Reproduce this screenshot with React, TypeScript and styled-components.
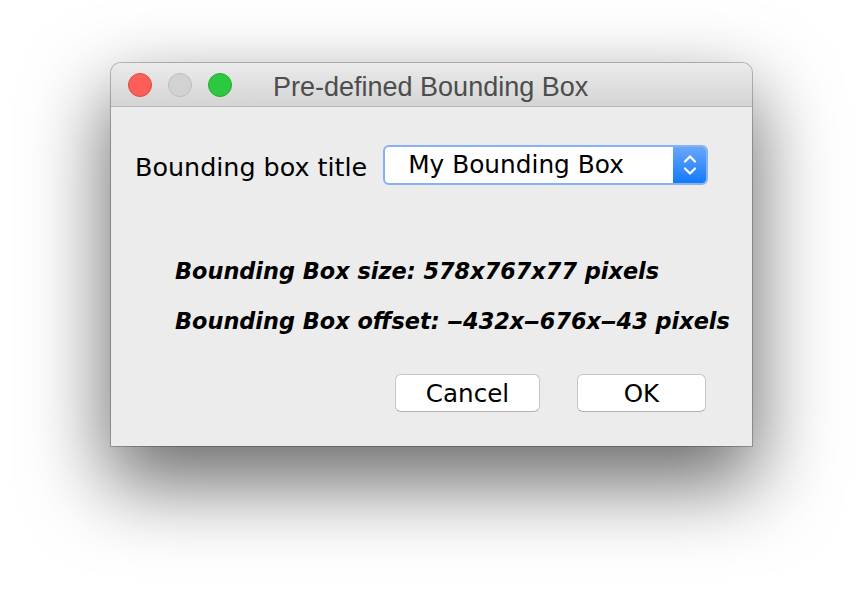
import * as React from "react";
import styled, { createGlobalStyle } from "styled-components";

const GlobalStyle = createGlobalStyle`
	html, body {
		margin: 0;
		padding: 0;
		background: #ffffff;
	}
`;

const Desktop = styled.div`
	width: 864px;
	height: 606px;
	box-sizing: border-box;
	padding: 63px 0 0 111px;
	background: #ffffff;
	overflow: hidden;
`;

const Window = styled.div`
	width: 641px;
	height: 383px;
	display: flex;
	flex-direction: column;
	background: #ececec;
	border-radius: 10px 10px 0 0;
	box-shadow: 0 0 0 1px rgba(0, 0, 0, 0.24), 0 34px 80px 4px rgba(0, 0, 0, 0.58);
	overflow: hidden;
`;

const TitleBar = styled.div`
	height: 43px;
	flex: none;
	display: flex;
	align-items: center;
	padding-left: 17px;
	background: linear-gradient(#ebebeb, #d4d4d4);
	border-bottom: 1px solid #b9b9b9;
`;

const Lights = styled.div`
	display: flex;
	gap: 16px;
`;

const Light = styled.span<{ $fill: string; $edge: string }>`
	width: 22px;
	height: 22px;
	border-radius: 50%;
	background: ${(p) => p.$fill};
	border: 1px solid ${(p) => p.$edge};
`;

const Title = styled.div`
	margin-left: 41px;
	padding-top: 6px;
	font-family: "Liberation Sans", Arial, sans-serif;
	font-size: 27px;
	color: #4d4d4d;
	line-height: 1;
`;

const Body = styled.div`
	flex: 1;
	display: flex;
	flex-direction: column;
	padding: 38px 44px 0 24px;
	font-family: "DejaVu Sans", "Liberation Sans", sans-serif;
	color: #000;
`;

const FieldRow = styled.div`
	display: flex;
	align-items: center;
	gap: 16px;
`;

const Label = styled.span`
	flex: none;
	white-space: nowrap;
	font-size: 25.4px;
	line-height: 1;
	padding-top: 6px;
`;

const Select = styled.div`
	width: 325px;
	height: 40px;
	flex: none;
	box-sizing: border-box;
	display: flex;
	border: 2px solid #86b2f2;
	border-radius: 6px;
	background: #fff;
	overflow: hidden;
`;

const SelectValue = styled.div`
	flex: 1;
	display: flex;
	align-items: center;
	padding-left: 23px;
	font-size: 24.8px;
	line-height: 1;
	white-space: nowrap;
`;

const Stepper = styled.div`
	width: 33px;
	display: flex;
	align-items: center;
	justify-content: center;
	background: linear-gradient(#69a6fb, #137afa);
`;

const Info = styled.div`
	display: flex;
	flex-direction: column;
	gap: 28px;
	margin: 75px 0 0 40px;
`;

const InfoLine = styled.div`
	font-size: 22.4px;
	font-weight: bold;
	font-style: italic;
	line-height: 1;
	white-space: nowrap;
`;

const Actions = styled.div`
	display: flex;
	justify-content: flex-end;
	gap: 37px;
	margin-top: 41px;
	padding-right: 2px;
`;

const Button = styled.button<{ $width: number }>`
	width: ${(p) => p.$width}px;
	height: 38px;
	box-sizing: border-box;
	padding: 0;
	background: #fff;
	border: 1px solid #c6c6c6;
	border-bottom-color: #b0b0b0;
	border-radius: 6px;
	font-family: "DejaVu Sans", "Liberation Sans", sans-serif;
	font-size: 24.6px;
	color: #000;
	line-height: 1;
	padding-top: 2px;
`;

export default function App(): JSX.Element {
	return (
		<Desktop>
			<GlobalStyle />
			<Window>
				<TitleBar>
					<Lights>
						<Light $fill="#fc5f57" $edge="#df4a43" />
						<Light $fill="#d2d2d2" $edge="#bdbdbd" />
						<Light $fill="#2dc83f" $edge="#23a934" />
					</Lights>
					<Title>Pre-defined Bounding Box</Title>
				</TitleBar>
				<Body>
					<FieldRow>
						<Label>Bounding box title</Label>
						<Select>
							<SelectValue>My Bounding Box</SelectValue>
							<Stepper>
								<svg width="14" height="24" viewBox="0 0 14 24" fill="none" stroke="#fff" strokeWidth="2.2" strokeLinecap="round" strokeLinejoin="round">
									<path d="M2 8.5 L7 3.5 L12 8.5" />
									<path d="M2 15.5 L7 20.5 L12 15.5" />
								</svg>
							</Stepper>
						</Select>
					</FieldRow>
					<Info>
						<InfoLine>Bounding Box size: 578x767x77 pixels</InfoLine>
						<InfoLine>Bounding Box offset: ‒432x‒676x‒43 pixels</InfoLine>
					</Info>
					<Actions>
						<Button $width={145}>Cancel</Button>
						<Button $width={129}>OK</Button>
					</Actions>
				</Body>
			</Window>
		</Desktop>
	);
}
